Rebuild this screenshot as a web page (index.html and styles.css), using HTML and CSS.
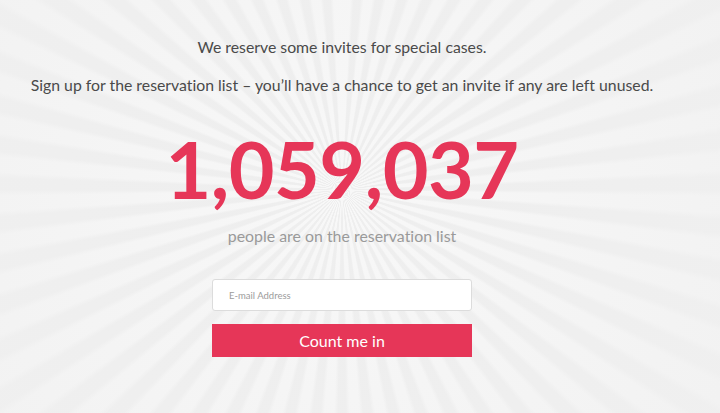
FILE: index.html
```html
<!DOCTYPE html>
<html lang="en">
<head>
<meta charset="UTF-8">
<meta name="viewport" content="width=device-width, initial-scale=1.0">
<title>Reservation List</title>
<link rel="stylesheet" href="styles.css">
</head>
<body>
<div class="page">
  <div class="intro">
    <p>We reserve some invites for special cases.</p>
    <p>Sign up for the reservation list &ndash; you&rsquo;ll have a chance to get an invite if any are left unused.</p>
  </div>
  <div class="counter">1,059,037</div>
  <div class="counter-label">people are on the reservation list</div>
  <form class="signup">
    <input class="email" type="text" placeholder="E-mail Address">
    <button class="button" type="button">Count me in</button>
  </form>
</div>
</body>
</html>
```

FILE: styles.css
```css
html, body {
  height: 100%;
}

body {
  margin: 0;
  font-family: Lato, "Open Sans", sans-serif;
  font-variant-ligatures: none;
  color: #444;
  background-color: #efefef;
  background-image:
    radial-gradient(circle at 342px 190px, rgba(240, 240, 240, 0) 0, rgba(240, 240, 240, 0.4) 220px, rgba(240, 240, 240, 0.8) 460px),
    repeating-conic-gradient(from 0deg at 342px 190px, #f8f8f8 0deg 2.5deg, #eeeeee 3.5deg 5.5deg, #f8f8f8 6.5deg);
}

.page {
  width: 684px;
  display: flex;
  flex-direction: column;
  align-items: center;
  padding-top: 36px;
}

.intro {
  text-align: center;
  font-size: 15.8px;
  color: #4a4a4a;
}

.intro p {
  margin: 0 0 16px 0;
  line-height: 22px;
}

.counter {
  margin-top: 17px;
  font-size: 79px;
  font-weight: 700;
  line-height: 80px;
  color: #e63658;
  letter-spacing: -0.5px;
}

.counter-label {
  margin-top: 17px;
  font-size: 15.9px;
  color: #9a9a9a;
}

.signup {
  margin-top: 34px;
  width: 260px;
  display: flex;
  flex-direction: column;
  gap: 13px;
}

.email {
  box-sizing: border-box;
  height: 32px;
  padding: 0 16px;
  border: 1px solid #dcdcdc;
  border-radius: 3px;
  background: #fff;
  font-family: Lato, sans-serif;
  font-variant-ligatures: none;
  font-size: 9.5px;
}

.email::placeholder {
  color: #9c9c9c;
}

.button {
  height: 33px;
  border: none;
  background-color: #e63658;
  color: #fff;
  font-family: Lato, sans-serif;
  font-size: 16px;
  cursor: pointer;
}
```
